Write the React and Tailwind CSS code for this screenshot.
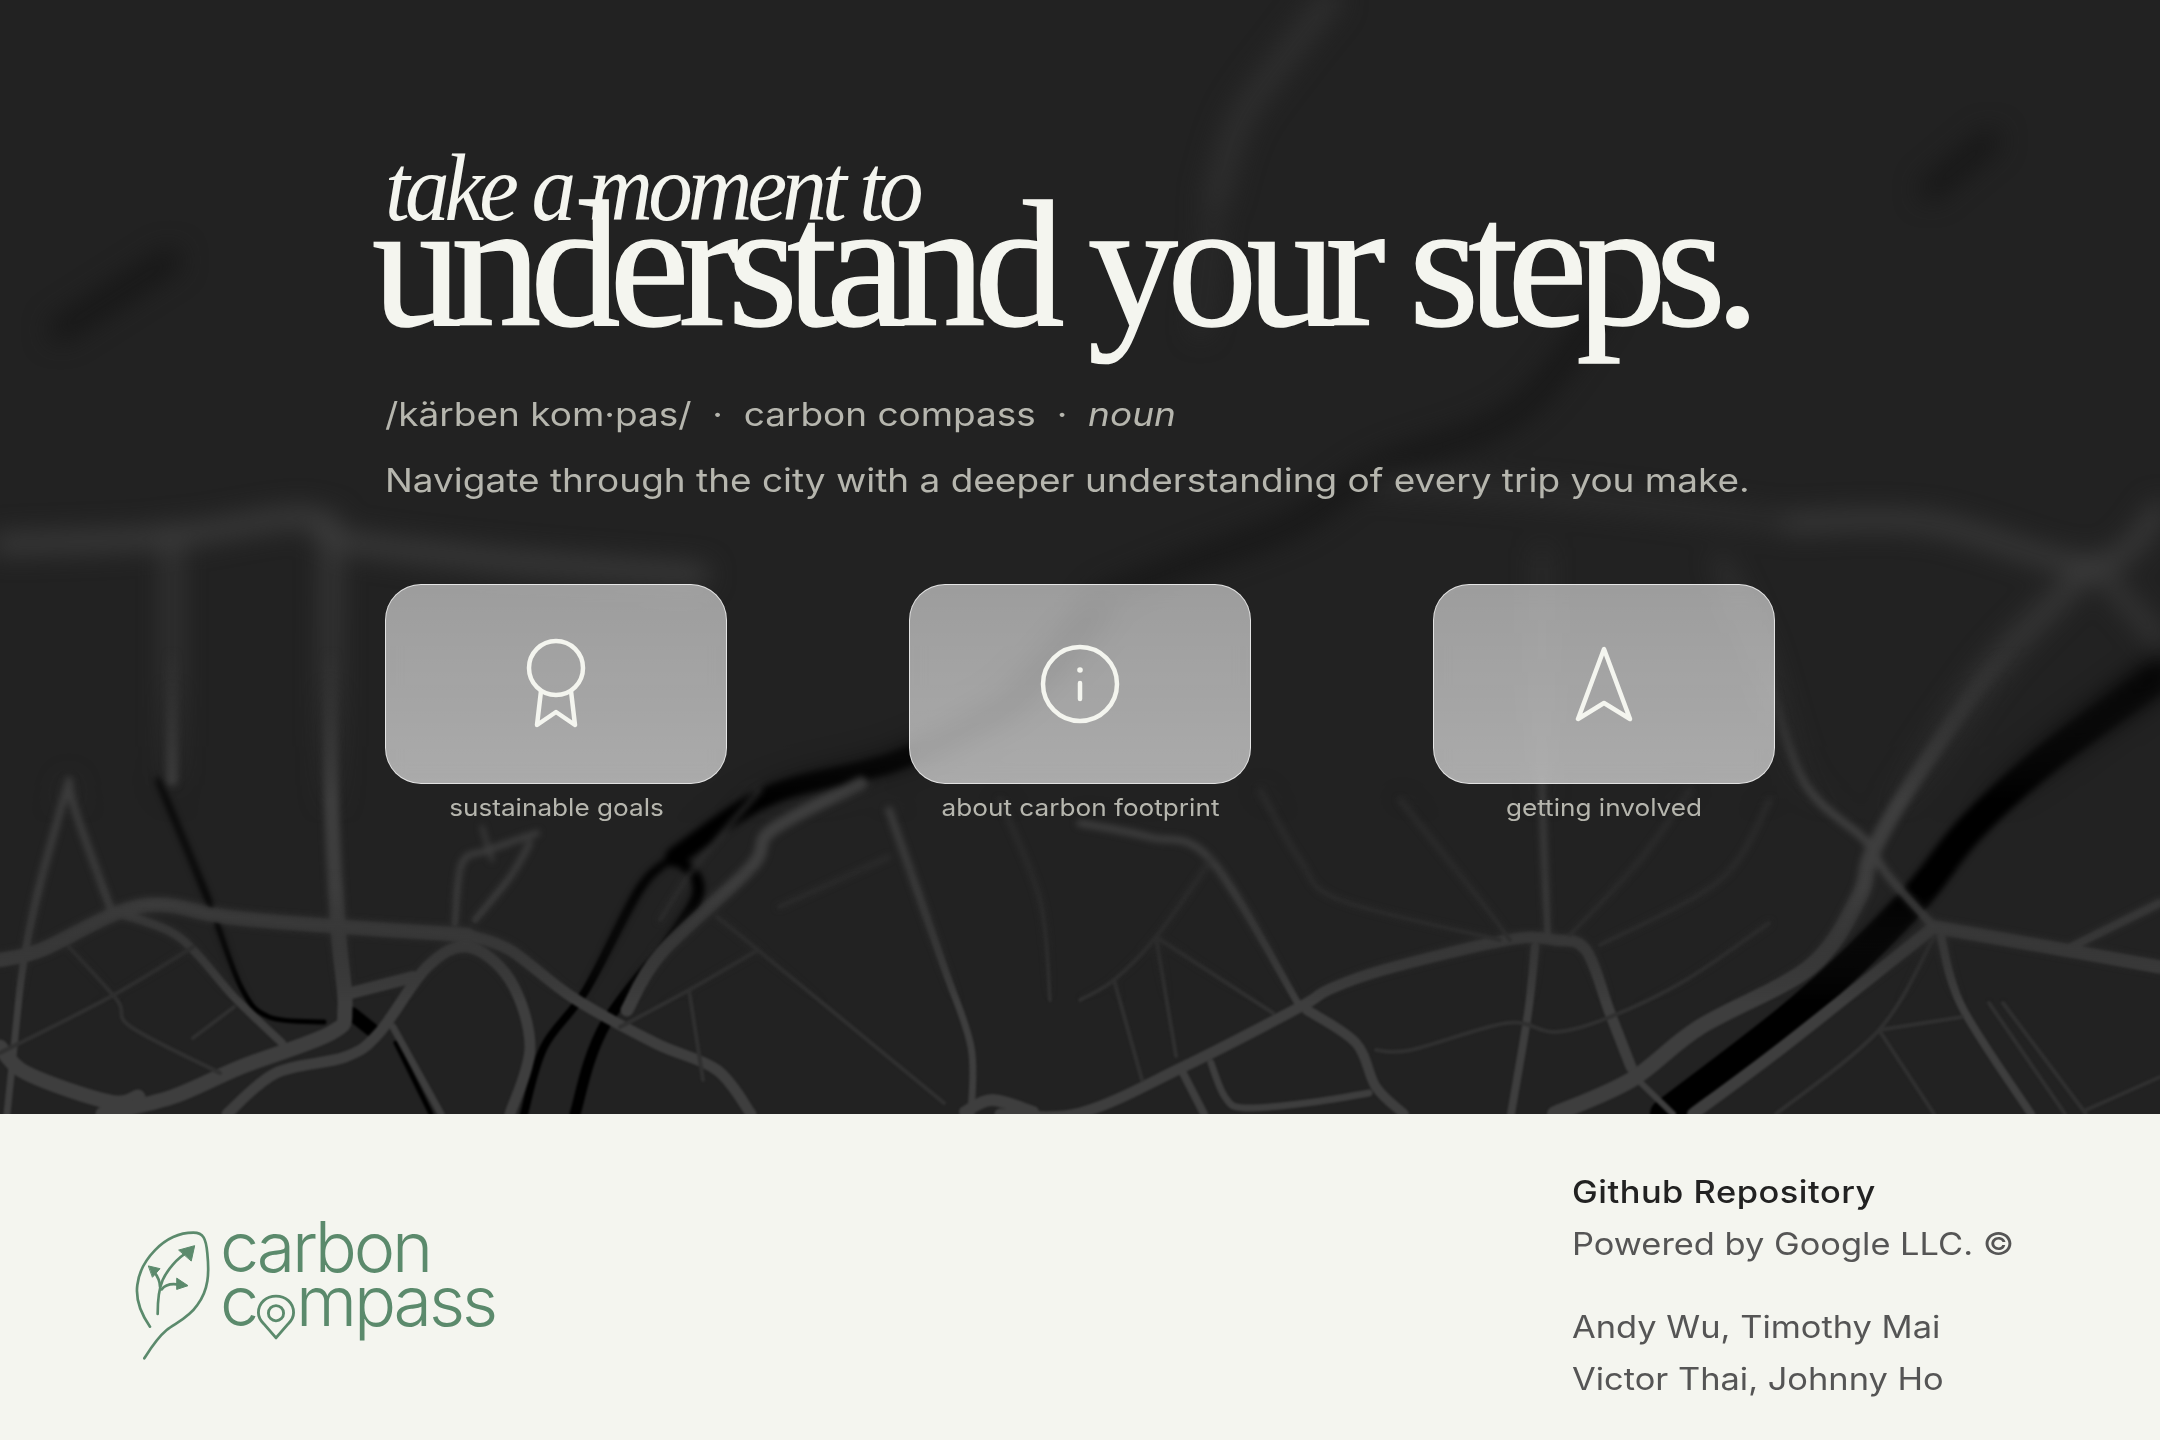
const G = '#3e3e3e'
const T = '#303030'
const K = '#000000'
const D = '#161616'

// street map, in hero pixels: [colour, width, points]
const roads = [
  // motorways, under everything else
  [K, 5, [[158, 780], [207, 897], [241, 987], [269, 1017], [324, 1022]]],
  [K, 14, [[352, 1014], [372, 1030]]],
  [K, 5, [[396, 1043], [431, 1114]]],
  [K, 8, [[675, 857], [641, 887], [586, 990], [544, 1047], [524, 1114]]],
  [K, 11, [[675, 857], [696, 900], [606, 1023], [575, 1114]]],
  [K, 20, [[675, 857], [770, 795], [890, 763], [970, 727], [1023, 693], [1107, 597]]],
  [D, 20, [[1107, 597], [1185, 565], [1295, 523], [1378, 468], [1515, 413], [1600, 310]]],
  [K, 30, [[1665, 1114], [1803, 1007], [1907, 907], [1969, 830], [2045, 760], [2160, 675]]],
  [D, 22, [[60, 330], [170, 260]]],
  [D, 20, [[1930, 190], [1990, 140]]],

  // main roads
  [G, 14, [[0, 960], [41, 950], [117, 913], [165, 905], [227, 917], [345, 927], [468, 935]]],
  [G, 11, [[468, 935], [510, 950], [572, 997], [655, 1043], [717, 1070], [751, 1114]]],
  [G, 15, [[0, 1047], [21, 1070], [69, 1090], [117, 1103], [138, 1097]]],
  [G, 15, [[103, 1114], [172, 1097], [241, 1067], [331, 1033], [345, 1007], [338, 927], [331, 780], [331, 520]]],
  [G, 11, [[227, 1114], [276, 1073], [345, 1057], [379, 1033], [427, 967], [468, 947], [510, 980], [530, 1047], [510, 1114]]],
  [G, 8, [[117, 913], [179, 937], [234, 997], [282, 1043]]],
  [G, 7, [[69, 780], [41, 880], [28, 937], [21, 980], [14, 1047], [7, 1114]]],
  [G, 7, [[69, 780], [76, 813], [110, 907]]],
  [G, 7, [[393, 1027], [441, 1114]]],
  [G, 13, [[861, 783], [772, 830], [751, 867], [661, 953], [627, 1010]]],
  [G, 7, [[889, 810], [944, 967], [971, 1047], [971, 1114]]],
  [G, 12, [[965, 1112], [992, 1100], [1033, 1112]]],
  [G, 6, [[455, 923], [462, 863], [489, 850], [537, 833]]],
  [G, 6, [[475, 920], [510, 877], [530, 843]]],
  [G, 4, [[482, 827], [492, 860]]],
  [G, 12, [[351, 993], [413, 977]]],
  [G, 11, [[1000, 1114], [1080, 1113], [1183, 1067], [1300, 1007], [1328, 990], [1383, 970], [1507, 940], [1555, 940], [1586, 950], [1610, 1013], [1631, 1067]]],
  [G, 16, [[1555, 1114], [1631, 1080], [1700, 1027], [1810, 967], [1859, 897], [1872, 853], [1914, 780], [1998, 661], [2094, 565]]],
  [G, 12, [[1693, 1114], [1783, 1047], [1934, 927]]],
  [G, 8, [[1934, 927], [1886, 873], [1865, 840], [1803, 780], [1760, 650], [1720, 560]]],
  [G, 13, [[1934, 927], [2065, 950], [2160, 967]]],
  [G, 8, [[2065, 950], [2160, 903]]],
  [G, 8, [[1941, 937], [1962, 1007], [2031, 1114]]],
  [G, 6, [[1548, 940], [1542, 780], [1542, 550]]],
  [G, 8, [[1535, 947], [1528, 1013], [1511, 1114]]],
  [G, 7, [[1080, 823], [1149, 837], [1211, 860], [1300, 1007]]],
  [G, 10, [[1307, 1010], [1356, 1043], [1376, 1087], [1404, 1114]]],
  [G, 8, [[1183, 1073], [1204, 1114]]],
  [G, 7, [[1211, 1063], [1225, 1097], [1245, 1108], [1314, 1102], [1369, 1093]]],
  [G, 6, [[1638, 1080], [1673, 1114]]],

  // blurred streets up top
  [G, 18, [[0, 544], [165, 537], [303, 517], [340, 540], [500, 560], [700, 575]]],
  [G, 12, [[172, 530], [172, 780]]],
  [T, 22, [[1330, 0], [1290, 50], [1240, 120], [1215, 200]]],
  [T, 12, [[1215, 200], [1200, 330]]],
  [T, 14, [[1378, 482], [1600, 500], [1790, 523]]],
  [G, 16, [[1790, 523], [1929, 523], [2094, 565], [2160, 510]]],
  [G, 12, [[2094, 565], [2160, 640]]],

  // side streets
  [T, 4, [[0, 1053], [110, 997], [193, 947]]],
  [T, 4, [[69, 947], [117, 1000], [131, 1027], [220, 1073]]],
  [T, 4, [[234, 1007], [193, 1038]]],
  [T, 4, [[717, 917], [758, 950], [944, 1103]]],
  [T, 4, [[758, 950], [689, 990], [620, 1027]]],
  [T, 4, [[779, 907], [889, 857]]],
  [T, 4, [[689, 990], [703, 1080]]],
  [T, 4, [[1376, 1050], [1411, 1050], [1507, 1023], [1555, 1032], [1610, 1017], [1686, 980], [1769, 923]]],
  [T, 4, [[1879, 1030], [1962, 1017]]],
  [T, 4, [[1776, 1114], [1879, 1030], [1934, 937]]],
  [T, 4, [[1879, 1030], [1934, 1114]]],
  [T, 4, [[1989, 1003], [2065, 1114]]],
  [T, 4, [[2003, 1003], [2086, 1114]]],
  [T, 4, [[2086, 1110], [2160, 1077]]],
  [T, 4, [[1080, 1000], [1114, 980], [1156, 937], [1211, 860]]],
  [T, 4, [[1114, 980], [1142, 1080]]],
  [T, 4, [[1156, 937], [1176, 1056]]],
  [T, 4, [[1156, 937], [1273, 1013]]],
  [T, 4, [[1260, 790], [1300, 860], [1340, 900], [1500, 940]]],
  [T, 4, [[1690, 790], [1640, 860], [1570, 935]]],
  [T, 4, [[1770, 800], [1720, 880], [1600, 945]]],
  [T, 4, [[1400, 800], [1480, 900], [1510, 940]]],
  [T, 4, [[760, 790], [700, 860], [660, 920]]],
  [T, 4, [[1000, 800], [1040, 900], [1050, 1000]]],
]

// catmull-rom through the points
function smooth(p) {
  let d = `M${p[0][0]} ${p[0][1]}`
  for (let i = 0; i < p.length - 1; i++) {
    const a = p[i - 1] || p[i]
    const b = p[i]
    const c = p[i + 1]
    const e = p[i + 2] || c
    d += `C${b[0] + (c[0] - a[0]) / 6} ${b[1] + (c[1] - a[1]) / 6} ${c[0] - (e[0] - b[0]) / 6} ${c[1] - (e[1] - b[1]) / 6} ${c[0]} ${c[1]}`
  }
  return d
}

function Roads() {
  return (
    <g fill="none" strokeLinecap="round" strokeLinejoin="round">
      {roads.map(([c, w, pts], i) => (
        <path key={i} d={smooth(pts)} stroke={c} strokeWidth={w} />
      ))}
    </g>
  )
}

function MapBackground() {
  return (
    <svg className="absolute inset-0" width="2160" height="1114" viewBox="0 0 2160 1114">
      <defs>
        <filter id="blurBig" colorInterpolationFilters="sRGB" x="-5%" y="-5%" width="110%" height="110%"><feGaussianBlur stdDeviation="13" /></filter>
        <filter id="blurMid" colorInterpolationFilters="sRGB" x="-5%" y="-5%" width="110%" height="110%"><feGaussianBlur stdDeviation="3" /></filter>
        <filter id="blurLow" colorInterpolationFilters="sRGB" x="-5%" y="-5%" width="110%" height="110%"><feGaussianBlur stdDeviation="1" /></filter>
        <linearGradient id="fadeTop" gradientUnits="userSpaceOnUse" x1="0" y1="0" x2="0" y2="1114">
          <stop offset="0.6" stopColor="#fff" />
          <stop offset="0.74" stopColor="#000" />
        </linearGradient>
        <linearGradient id="fadeMid" gradientUnits="userSpaceOnUse" x1="0" y1="0" x2="0" y2="1114">
          <stop offset="0.58" stopColor="#000" />
          <stop offset="0.72" stopColor="#fff" />
          <stop offset="0.8" stopColor="#fff" />
          <stop offset="0.9" stopColor="#000" />
        </linearGradient>
        <linearGradient id="fadeLow" gradientUnits="userSpaceOnUse" x1="0" y1="0" x2="0" y2="1114">
          <stop offset="0.78" stopColor="#000" />
          <stop offset="0.9" stopColor="#fff" />
        </linearGradient>
        <mask id="maskTop" maskUnits="userSpaceOnUse" x="0" y="0" width="2160" height="1114"><rect width="2160" height="1114" fill="url(#fadeTop)" /></mask>
        <mask id="maskMid" maskUnits="userSpaceOnUse" x="0" y="0" width="2160" height="1114"><rect width="2160" height="1114" fill="url(#fadeMid)" /></mask>
        <mask id="maskLow" maskUnits="userSpaceOnUse" x="0" y="0" width="2160" height="1114"><rect width="2160" height="1114" fill="url(#fadeLow)" /></mask>
      </defs>
      <g mask="url(#maskTop)"><g filter="url(#blurBig)"><Roads /></g></g>
      <g mask="url(#maskMid)"><g filter="url(#blurMid)"><Roads /></g></g>
      <g mask="url(#maskLow)"><g filter="url(#blurLow)"><Roads /></g></g>
    </svg>
  )
}

function RibbonIcon() {
  return (
    <svg width="62" height="92" viewBox="0 0 62 92" fill="none" stroke="#f4f5ef" strokeWidth="4.500" strokeLinecap="round" strokeLinejoin="round">
      <circle cx="31" cy="30" r="27" />
      <path d="M16 53 12 87 31 74 50 87 46 53" />
    </svg>
  )
}

function InfoIcon() {
  return (
    <svg width="80" height="80" viewBox="0 0 80 80" fill="none" stroke="#f4f5ef" strokeWidth="4.500" strokeLinecap="round">
      <circle cx="40" cy="40" r="37" />
      <circle cx="40" cy="26" r="2.800" fill="#f4f5ef" stroke="none" />
      <path d="M40 39V55" />
    </svg>
  )
}

function NavIcon() {
  return (
    <svg width="60" height="76" viewBox="0 0 60 76" fill="none" stroke="#f4f5ef" strokeWidth="4.500" strokeLinecap="round" strokeLinejoin="round">
      <path d="M30 3 4 73 30 57 56 73Z" />
    </svg>
  )
}

function Card({ label, children }) {
  return (
    <div className="w-[342px] flex flex-col items-center">
      <div className="w-[342px] h-[200px] rounded-[36px] bg-gradient-to-b from-white/[0.56] to-white/[0.62] backdrop-blur-[10px] border border-white/70 flex items-center justify-center">
        {children}
      </div>
      <div className="mt-[10px] scale-x-[1.09] text-[24px] leading-[28px] text-[#b6b6ae] font-['Inter',sans-serif]">{label}</div>
    </div>
  )
}

function LeafLogo() {
  return (
    <svg width="80" height="132" viewBox="72 120 240 396" fill="none" stroke="#5b8a6c" strokeWidth="8" strokeLinecap="round" strokeLinejoin="round">
      <path d="M120 410C92 370 76 330 82 285C90 215 160 128 250 128C280 128 288 145 292 190C298 250 296 300 262 345C235 385 195 400 170 420C140 445 122 475 103 505" />
      <path d="M143 372C143 330 145 300 158 270C172 240 200 205 235 185" />
      <path d="M150 290C150 270 142 258 132 245" />
      <path d="M155 298C165 285 185 280 208 284" />
      <path d="M207 180 254 167 244 212Z" fill="#5b8a6c" strokeWidth="3" />
      <path d="M116 228 150 236 128 261Z" fill="#5b8a6c" strokeWidth="3" />
      <path d="M201 265 234 287 201 298Z" fill="#5b8a6c" strokeWidth="3" />
    </svg>
  )
}

function PinO() {
  return (
    <svg width="38" height="46" viewBox="0 0 40 48" fill="none" stroke="#5b8a6c" strokeWidth="3" className="mx-[1px] mb-[-12px] self-end" strokeLinejoin="round">
      <path d="M20 46 7 31C3 27 1.500 23 1.500 19.500 1.500 9 10 2 20 2S38.500 9 38.500 19.500C38.500 23 37 27 33 31Z" />
      <circle cx="20" cy="20" r="8" />
    </svg>
  )
}

export default function App() {
  return (
    <div className="w-[2160px] h-[1440px] overflow-hidden bg-[#f4f5ef] font-['Inter',sans-serif]">
      <section className="relative h-[1114px] bg-[#222222] overflow-hidden">
        <MapBackground />
        <div className="relative pl-[385px] pt-[140px]">
          <h2 className="origin-left scale-x-[0.93] font-['Liberation_Serif',serif] italic text-[96px] leading-[96px] tracking-[-0.055em] text-[#f4f5ef]">take a moment to</h2>
          <h1 className="font-['Liberation_Serif',serif] text-[180px] leading-[180px] tracking-[-0.06em] [-webkit-text-stroke:1.5px_#f4f5ef] text-[#f4f5ef] -ml-[13px] -mt-[61px] whitespace-nowrap">understand your steps.</h1>
          <p className="origin-left scale-x-[1.12] mt-[37px] text-[33px] leading-[44px] text-[#b6b6ae] whitespace-pre">
            /kärben kom·pas/  ·  carbon compass  ·  <i>noun</i>
          </p>
          <p className="origin-left scale-x-[1.12] mt-[22px] text-[33px] leading-[44px] text-[#b6b6ae] whitespace-nowrap">
            Navigate through the city with a deeper understanding of every trip you make.
          </p>
          <div className="mt-[82px] flex gap-[182px]">
            <Card label="sustainable goals"><RibbonIcon /></Card>
            <Card label="about carbon footprint"><InfoIcon /></Card>
            <Card label="getting involved"><NavIcon /></Card>
          </div>
        </div>
      </section>

      <footer className="flex justify-between h-[326px]">
        <div className="flex items-start pl-[134px] pt-[116px]">
          <LeafLogo />
          <div className="ml-[6px] -mt-[10px] text-[#5b8a6c] text-[70px] leading-[54px] font-light tracking-[-0.045em] font-['Inter',sans-serif]">
            <div>carbon</div>
            <div className="flex">c<PinO />mpass</div>
          </div>
        </div>
        <div className="w-[588px] origin-left scale-x-[1.11] pt-[52px] text-[31px] leading-[52px] text-[#555555]">
          <div className="text-[#222222] font-medium tracking-[0.015em]">Github Repository</div>
          <div>Powered by Google LLC. ©</div>
          <div className="mt-[31px]">Andy Wu, Timothy Mai</div>
          <div>Victor Thai, Johnny Ho</div>
        </div>
      </footer>
    </div>
  )
}
